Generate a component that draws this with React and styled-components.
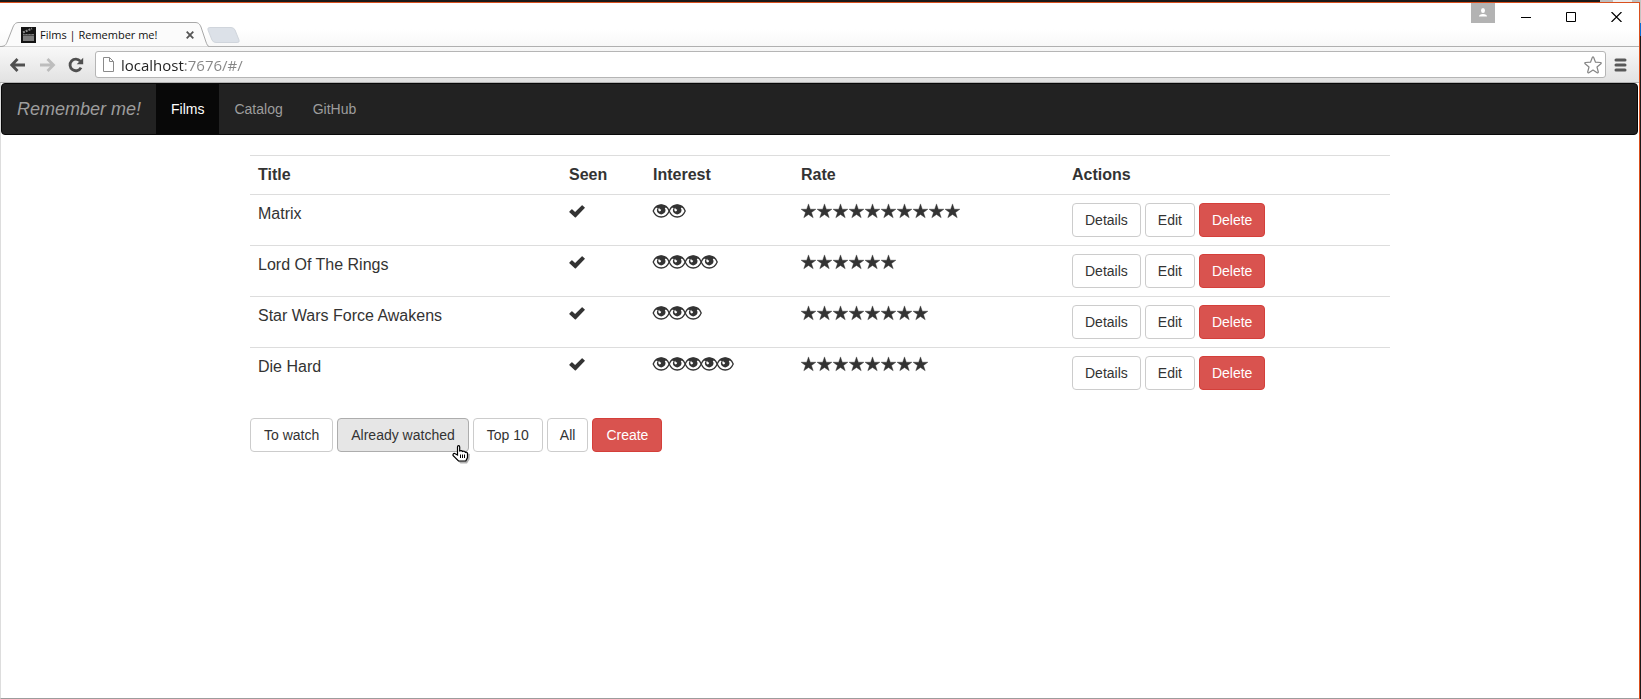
import React from "react";
import styled, { createGlobalStyle, css } from "styled-components";

const GlobalStyle = createGlobalStyle`
  *, *::before, *::after { box-sizing: border-box; }
  body {
    margin: 0;
    background: #fff;
    color: #333;
    font-family: "Liberation Sans", Arial, Helvetica, sans-serif;
    font-size: 14px;
    line-height: 20px;
  }
`;

/* Desktop and browser window */

const Desktop = styled.div`
  min-height: 100vh;
  display: flex;
  padding: 2px 1px 0 0;
  background:
    linear-gradient(#0a6ed8, #0a6ed8) right 23px / 1px 13px no-repeat,
    linear-gradient(#c4c4c4, #c4c4c4) right top / 1px 36px no-repeat,
    linear-gradient(90deg, #bdbdbd 13px, #ededed 13px 32px, #bdbdbd 32px) right top / 41px 2px no-repeat,
    #1b1a1a;
`;

const BrowserWindow = styled.div`
  flex: 1;
  min-width: 0;
  display: flex;
  flex-direction: column;
  background: #fff;
  border: solid #d9501e;
  border-width: 1px 1px 0 0;
`;

const TitleBar = styled.header`
  display: flex;
  height: 44px;
  background: linear-gradient(#fff 60%, #f8f8f8);
  border-bottom: 1px solid #b0b0b0;
`;

const Tab = styled.div`
  position: relative;
  display: flex;
  align-items: center;
  width: 209px;
  height: 25px;
  margin: 19px 0 0;
  padding: 0 14px 0 21px;
`;

const TabShape = styled.svg`
  position: absolute;
  left: 0;
  top: 0;
`;

const Favicon = styled.svg`
  position: relative;
  flex: none;
`;

const TabTitle = styled.span`
  position: relative;
  flex: 1;
  margin-left: 4px;
  font: 11px/16px "Open Sans", "Noto Sans", sans-serif;
  color: #111;
  white-space: nowrap;
`;

const IconButton = styled.button`
  position: relative;
  display: flex;
  flex: none;
  align-items: center;
  justify-content: center;
  width: ${(p) => p.$width || 29}px;
  height: ${(p) => p.$height || 28}px;
  padding: 0;
  border: 0;
  background: ${(p) => p.$fill || "none"};
`;

const WindowControls = styled.div`
  display: flex;
`;

const ProfileArea = styled.div`
  margin-left: auto;
  padding-right: 9px;
`;

const Toolbar = styled.div`
  display: flex;
  align-items: center;
  height: 36px;
  padding: 0 6px 0 4px;
  background: linear-gradient(#f8f8f8, #e2e2e2);
  border-bottom: 1px solid #b2b2b2;
`;

const AddressBar = styled.label`
  flex: 1;
  min-width: 0;
  display: flex;
  align-items: center;
  height: 27px;
  margin-left: 4px;
  padding: 0 2px 0 7px;
  background: #fff;
  border: 1px solid #b5b5b5;
  border-radius: 3px;
`;

const AddressInput = styled.input`
  flex: 1;
  min-width: 0;
  height: 24px;
  margin-left: 7px;
  padding: 0;
  border: 0;
  outline: 0;
  font: 15px/24px "Open Sans", "Noto Sans", sans-serif;
  color: #808080;
  background: linear-gradient(90deg, #222 64px, #858585 64px);
  background-clip: text;
  -webkit-background-clip: text;
  -webkit-text-fill-color: transparent;
`;

/* Page */

const Page = styled.div`
  flex: 1;
  border-left: 1px solid #ddd;
  border-bottom: 1px solid #9c9c9c;
`;

const Navbar = styled.nav`
  display: flex;
  min-height: 52px;
  margin: 0 1px 20px 0;
  background: #222;
  border: 1px solid #080808;
  border-radius: 4px;
`;

const Brand = styled.a`
  padding: 15px;
  font-size: 18px;
  font-style: italic;
  color: #9d9d9d;
  text-decoration: none;
`;

const NavLink = styled.a`
  padding: 15px;
  color: ${(p) => (p.$active ? "#fff" : "#9d9d9d")};
  background: ${(p) => (p.$active ? "#080808" : "transparent")};
  text-decoration: none;
`;

const Container = styled.main`
  max-width: 1170px;
  margin: 0 auto;
  padding: 0 15px;
`;

const FilmTable = styled.table`
  width: 100%;
  margin-bottom: 20px;
  border-collapse: collapse;
  table-layout: fixed;
  font-size: 16px;
  line-height: 22px;
`;

const Col = styled.col`
  width: ${(p) => (p.$width ? `${p.$width}px` : "auto")};
`;

const cell = css`
  padding: 8px;
  border-top: 1px solid #ddd;
  text-align: left;
  vertical-align: top;
`;

const HeadCell = styled.th`
  ${cell}
`;

const Cell = styled.td`
  ${cell}
`;

const Icons = styled.span`
  display: flex;
`;

const ButtonRow = styled.div`
  display: flex;
  gap: 4px;
`;

const Button = styled.button`
  position: relative;
  height: 34px;
  padding: 6px ${(p) => (p.$wide ? 13 : 12)}px;
  border: 1px solid #ccc;
  border-radius: 4px;
  background: #fff;
  color: #333;
  font: 14px/20px "Liberation Sans", Arial, Helvetica, sans-serif;
  white-space: nowrap;
  ${(p) => p.$variant === "danger" && css`
    background: #d9534f;
    border-color: #d43f3a;
    color: #fff;
  `}
  ${(p) => p.$variant === "hover" && css`
    background: #e6e6e6;
    border-color: #adadad;
  `}
`;

const PointerCursor = styled.svg`
  position: absolute;
  right: -4px;
  top: 26px;
`;

const CheckIcon = () => (
  <svg width="16" height="16" viewBox="0 0 16 16" aria-label="seen">
    <path fill="#333" d="M13.3 2.3 16 4.7 6.9 14.3Q6.4 14.9 5.8 14.3L.4 9.3Q0 8.9.4 8.4L2.4 6.5Q2.9 6.1 3.4 6.5L6.1 9 12.7 2.4Q13 2 13.3 2.3Z" />
  </svg>
);

const EyeIcon = () => (
  <svg width="16" height="16" viewBox="0 0 16 16" overflow="visible">
    <path fill="none" stroke="#333" strokeWidth="1.3" d="M.2 7.900C2 3.600 5 2 8.200 2s6.200 1.600 8 5.900C14.400 12.300 11.200 14 8.200 14S2 12.300.2 7.900Z" />
    <path fill="#333" d="M2.800 4.300C4.400 2.500 6.200 1.600 8.200 1.600s3.800.900 5.400 2.700L11.800 5A4.200 4.200 0 1 1 4.600 5Z" />
    <path fill="#fff" d="M6.200 4.800Q6.200 6.600 8.200 6.400 8 8.500 6.600 8.500 5.200 8.300 5.300 6.600 5.400 5.400 6.200 4.800Z" />
  </svg>
);

const StarIcon = () => (
  <svg width="16" height="16" viewBox="0 0 16 16">
    <path fill="#333" stroke="#333" strokeWidth=".4" d="M7.500.9 9.300 6.200H14.900L10.500 9.500 12.200 14.700 7.500 11.500 2.800 14.700 4.500 9.500.1 6.200H5.700Z" />
  </svg>
);

const Repeat = ({ icon: Icon, count }) => (
  <Icons role="img" aria-label={String(count)}>
    {Array.from({ length: count }, (_, i) => <Icon key={i} />)}
  </Icons>
);

const films = [
  { title: "Matrix", interest: 2, rate: 10 },
  { title: "Lord Of The Rings", interest: 4, rate: 6 },
  { title: "Star Wars Force Awakens", interest: 3, rate: 8 },
  { title: "Die Hard", interest: 5, rate: 8 },
];

const TabStrip = () => (
  <TitleBar>
    <Tab>
      <TabShape width="209" height="25" viewBox="0 0 209 25">
        <path fill="#fbfbfb" stroke="#a8a8a8" d="M0 24.500C5 24.500 6 23 7.500 19L13 5C14.500 1.500 16 .5 19 .5H195C198 .5 199.500 1.500 201 5L206 20C207 22.500 207.500 24 209 24.500" />
      </TabShape>
      <Favicon width="15" height="16" viewBox="0 0 15 16">
        <path fill="#141414" d="M0 0H15V16H0Z" />
        <path fill="#7c7c7c" d="M2 7H13V14H2Z" />
        <path stroke="#8c8c8c" strokeWidth="2" strokeDasharray="2 1" d="M2 5.500 11 1.500" />
        <path stroke="#4a4a4a" d="M2 8.500H13M4 7V9M7 7V9M10 7V9" />
      </Favicon>
      <TabTitle>Films | Remember me!</TabTitle>
      <IconButton $width={10} $height={16} aria-label="Close tab">
        <svg width="8" height="8" viewBox="0 0 8 8">
          <path stroke="#555" strokeWidth="1.800" d="M.7.700 7.300 7.300M7.300.700.7 7.300" />
        </svg>
      </IconButton>
    </Tab>
    <IconButton $width={28} $height={42} aria-label="New tab">
      <svg width="34" height="42" viewBox="0 0 34 42" overflow="visible">
        <path fill="#dce1e8" stroke="#d0d5dc" d="M4 24.500H25Q28 24.500 29 27L33 37Q34 39.500 31 39.500H10Q7 39.500 6 37L2 27Q1 24.500 4 24.500Z" />
      </svg>
    </IconButton>
    <ProfileArea>
      <IconButton $width={24} $height={20} $fill="#b3b3b3" aria-label="Profile">
        <svg width="10" height="10" viewBox="0 0 10 10">
          <path fill="#fff" d="M3 2.500Q3 0 5 0T7 2.500Q7 5 5 5T3 2.500ZM1 8.500Q1 6 5 6T9 8.500Z" />
        </svg>
      </IconButton>
    </ProfileArea>
    <WindowControls>
      <IconButton $width={45} aria-label="Minimize">
        <svg width="11" height="10" viewBox="0 0 11 10"><path stroke="#000" d="M0 5.500H10" /></svg>
      </IconButton>
      <IconButton $width={45} aria-label="Maximize">
        <svg width="11" height="10" viewBox="0 0 11 10"><path fill="none" stroke="#000" d="M.5.500H9.500V9.500H.5Z" /></svg>
      </IconButton>
      <IconButton $width={45} aria-label="Close">
        <svg width="11" height="10" viewBox="0 0 11 10"><path stroke="#000" strokeWidth="1.200" d="M.5 0 10.500 10M10.500 0 .5 10" /></svg>
      </IconButton>
    </WindowControls>
  </TitleBar>
);

const Arrow = ({ flip }) => (
  <svg width="17" height="14" viewBox="0 0 17 14">
    <path fill="none" stroke={flip ? "#bdbdbd" : "#505050"} strokeWidth="2.800" d={flip ? "M1 7H14M8.500 1 14.500 7 8.500 13" : "M15 7H2.500M7.500 1 1.800 7 7.500 13"} />
  </svg>
);

const NavigationBar = () => (
  <Toolbar>
    <IconButton aria-label="Back"><Arrow /></IconButton>
    <IconButton aria-label="Forward"><Arrow flip /></IconButton>
    <IconButton aria-label="Reload">
      <svg width="17" height="16" viewBox="0 0 17 16">
        <path fill="none" stroke="#505050" strokeWidth="2.800" d="M12.300 4.200A5.800 5.800 0 1 0 13 10.600" />
        <path fill="#505050" d="M15.200.8V7.300H8.700Z" />
      </svg>
    </IconButton>
    <AddressBar>
      <svg width="11" height="16" viewBox="0 0 11 16">
        <path fill="#fff" stroke="#8a8a8a" d="M.5.500H6.500L10.500 4.500V14.500H.5ZM6.500.500V4.500H10.500" />
      </svg>
      <AddressInput aria-label="Address" defaultValue="localhost:7676/#/" />
      <IconButton $width={20} $height={24} aria-label="Bookmark">
        <svg width="18" height="18" viewBox="0 0 18 18">
          <path fill="#fff" stroke="#858585" strokeWidth="1.200" strokeLinejoin="round" d="M8.300 1.500Q9 .3 9.700 1.500L11.500 6.200 16.500 6.500Q17.800 6.800 16.900 7.800L13 11 14.300 16Q14.300 17.300 13.100 16.700L9 14 4.900 16.700Q3.700 17.300 3.700 16L5 11 1.100 7.800Q.2 6.800 1.500 6.500L6.500 6.200Z" />
        </svg>
      </IconButton>
    </AddressBar>
    <IconButton $width={27} aria-label="Menu">
      <svg width="15" height="14" viewBox="0 0 15 14" overflow="visible">
        <path stroke="#585858" strokeWidth="3" strokeLinecap="round" d="M4 2H13M4 7H13M4 12H13" />
      </svg>
    </IconButton>
  </Toolbar>
);

const HandPointer = () => (
  <PointerCursor width="20" height="20" viewBox="0 0 20 20" aria-hidden="true">
    <path fill="#000" opacity=".3" d="M9 6 18 9 17.500 14.500 15 18.500H8.500L4 14Z" />
    <path fill="#fff" stroke="#000" strokeWidth="1.200" d="M5.500 10V2Q5.500.7 6.600.7T7.700 2V6Q10 5.200 10.500 6.500 12.700 5.600 13.300 7.300 15.500 6.800 15.500 9V12.500L13.800 16H6.500L1 10.500Q.8 8.200 2.800 8.500Z" />
    <path stroke="#000" d="M8.500 9.500V13M10.500 9.500V13M12.500 9.500V13" />
  </PointerCursor>
);

export default function App() {
  return (
    <>
      <GlobalStyle />
      <Desktop>
        <BrowserWindow>
          <TabStrip />
          <NavigationBar />
          <Page>
            <Navbar>
              <Brand href="#/">Remember me!</Brand>
              <NavLink href="#/" $active>Films</NavLink>
              <NavLink href="#/catalog">Catalog</NavLink>
              <NavLink href="#/github">GitHub</NavLink>
            </Navbar>
            <Container>
              <FilmTable>
                <colgroup>
                  <Col $width={311} />
                  <Col $width={84} />
                  <Col $width={148} />
                  <Col $width={271} />
                  <Col />
                </colgroup>
                <thead>
                  <tr>
                    <HeadCell>Title</HeadCell>
                    <HeadCell>Seen</HeadCell>
                    <HeadCell>Interest</HeadCell>
                    <HeadCell>Rate</HeadCell>
                    <HeadCell>Actions</HeadCell>
                  </tr>
                </thead>
                <tbody>
                  {films.map((film) => (
                    <tr key={film.title}>
                      <Cell>{film.title}</Cell>
                      <Cell><Icons><CheckIcon /></Icons></Cell>
                      <Cell><Repeat icon={EyeIcon} count={film.interest} /></Cell>
                      <Cell><Repeat icon={StarIcon} count={film.rate} /></Cell>
                      <Cell>
                        <ButtonRow>
                          <Button>Details</Button>
                          <Button>Edit</Button>
                          <Button $variant="danger">Delete</Button>
                        </ButtonRow>
                      </Cell>
                    </tr>
                  ))}
                </tbody>
              </FilmTable>
              <ButtonRow>
                <Button $wide>To watch</Button>
                <Button $wide $variant="hover">Already watched<HandPointer /></Button>
                <Button $wide>Top 10</Button>
                <Button>All</Button>
                <Button $wide $variant="danger">Create</Button>
              </ButtonRow>
            </Container>
          </Page>
        </BrowserWindow>
      </Desktop>
    </>
  );
}
